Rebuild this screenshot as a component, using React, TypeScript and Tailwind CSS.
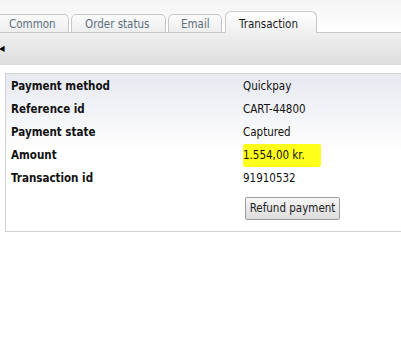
import React from "react";

type Row = { label: string; value: string; mark?: boolean };

const rows: Row[] = [
  { label: "Payment method", value: "Quickpay" },
  { label: "Reference id", value: "CART-44800" },
  { label: "Payment state", value: "Captured" },
  { label: "Amount", value: "1.554,00 kr.", mark: true },
  { label: "Transaction id", value: "91910532" },
];

const tabs = [
  { name: "Common", w: "w-[69px] mr-[2px]", pl: "pl-[9px]" },
  { name: "Order status", w: "w-[95px] mr-[2px]", pl: "pl-[13px]" },
  { name: "Email", w: "w-[54px] mr-[3px]", pl: "pl-[12px]" },
];

export default function App() {
  return (
    <div className="w-[401px] h-[338px] overflow-hidden bg-white text-[11.5px] text-[#111] [font-family:'DejaVu_Sans_Condensed','DejaVu_Sans',sans-serif]">
      {/* tab strip */}
      <div className="h-[33px] flex items-end border-b border-[#c6c6c6] bg-gradient-to-b from-[#f4f4f4] to-white">
        {tabs.map((t) => (
          <div
            key={t.name}
            className={`${t.w} ${t.pl} h-[19px] -mb-px pt-[3px] flex items-center rounded-t-[5px] border border-[#c8c8c8] bg-gradient-to-b from-[#fbfbfb] to-[#eeeeee] text-[#5c6e7e] first:rounded-tl-none first:border-l-0`}
          >
            {t.name}
          </div>
        ))}
        <div className="w-[92px] h-[22px] -mb-px pl-[13px] pt-[4px] flex items-center rounded-t-[6px] border border-b-0 border-[#c8c8c8] bg-gradient-to-b from-white to-[#f0f0f0] text-[#1c1c1c]">
          Transaction
        </div>
      </div>

      {/* toolbar */}
      <div className="h-[32px] flex items-center bg-gradient-to-b from-[#efefef] to-[#dedede]">
        <span className="-ml-[1px] text-[8px] leading-none text-black">◀</span>
      </div>

      {/* details panel */}
      <div className="pt-[8px] pl-[5px]">
        <div className="h-[159px] border border-r-0 border-[#d2d2d2] bg-gradient-to-b from-[#e7e9f1] via-white to-white pt-[1px]">
          {rows.map((r) => (
            <div key={r.label} className="h-[23px] flex items-center">
              <div className="w-[237px] pl-[5px] font-bold">{r.label}</div>
              <div>
                {r.mark ? (
                  <span className="inline-block bg-[#ffff1a] pr-[16px] py-[3px] -my-[3px] rounded-[2px]">{r.value}</span>
                ) : (
                  r.value
                )}
              </div>
            </div>
          ))}
          <div className="pl-[239px] pt-[7px]">
            <button className="h-[23px] w-[95px] border border-[#9c9c9c] rounded-[2px] bg-gradient-to-b from-[#f6f6f6] to-[#dcdcdc] text-[11.5px] text-[#222]">
              Refund payment
            </button>
          </div>
        </div>
      </div>
    </div>
  );
}
